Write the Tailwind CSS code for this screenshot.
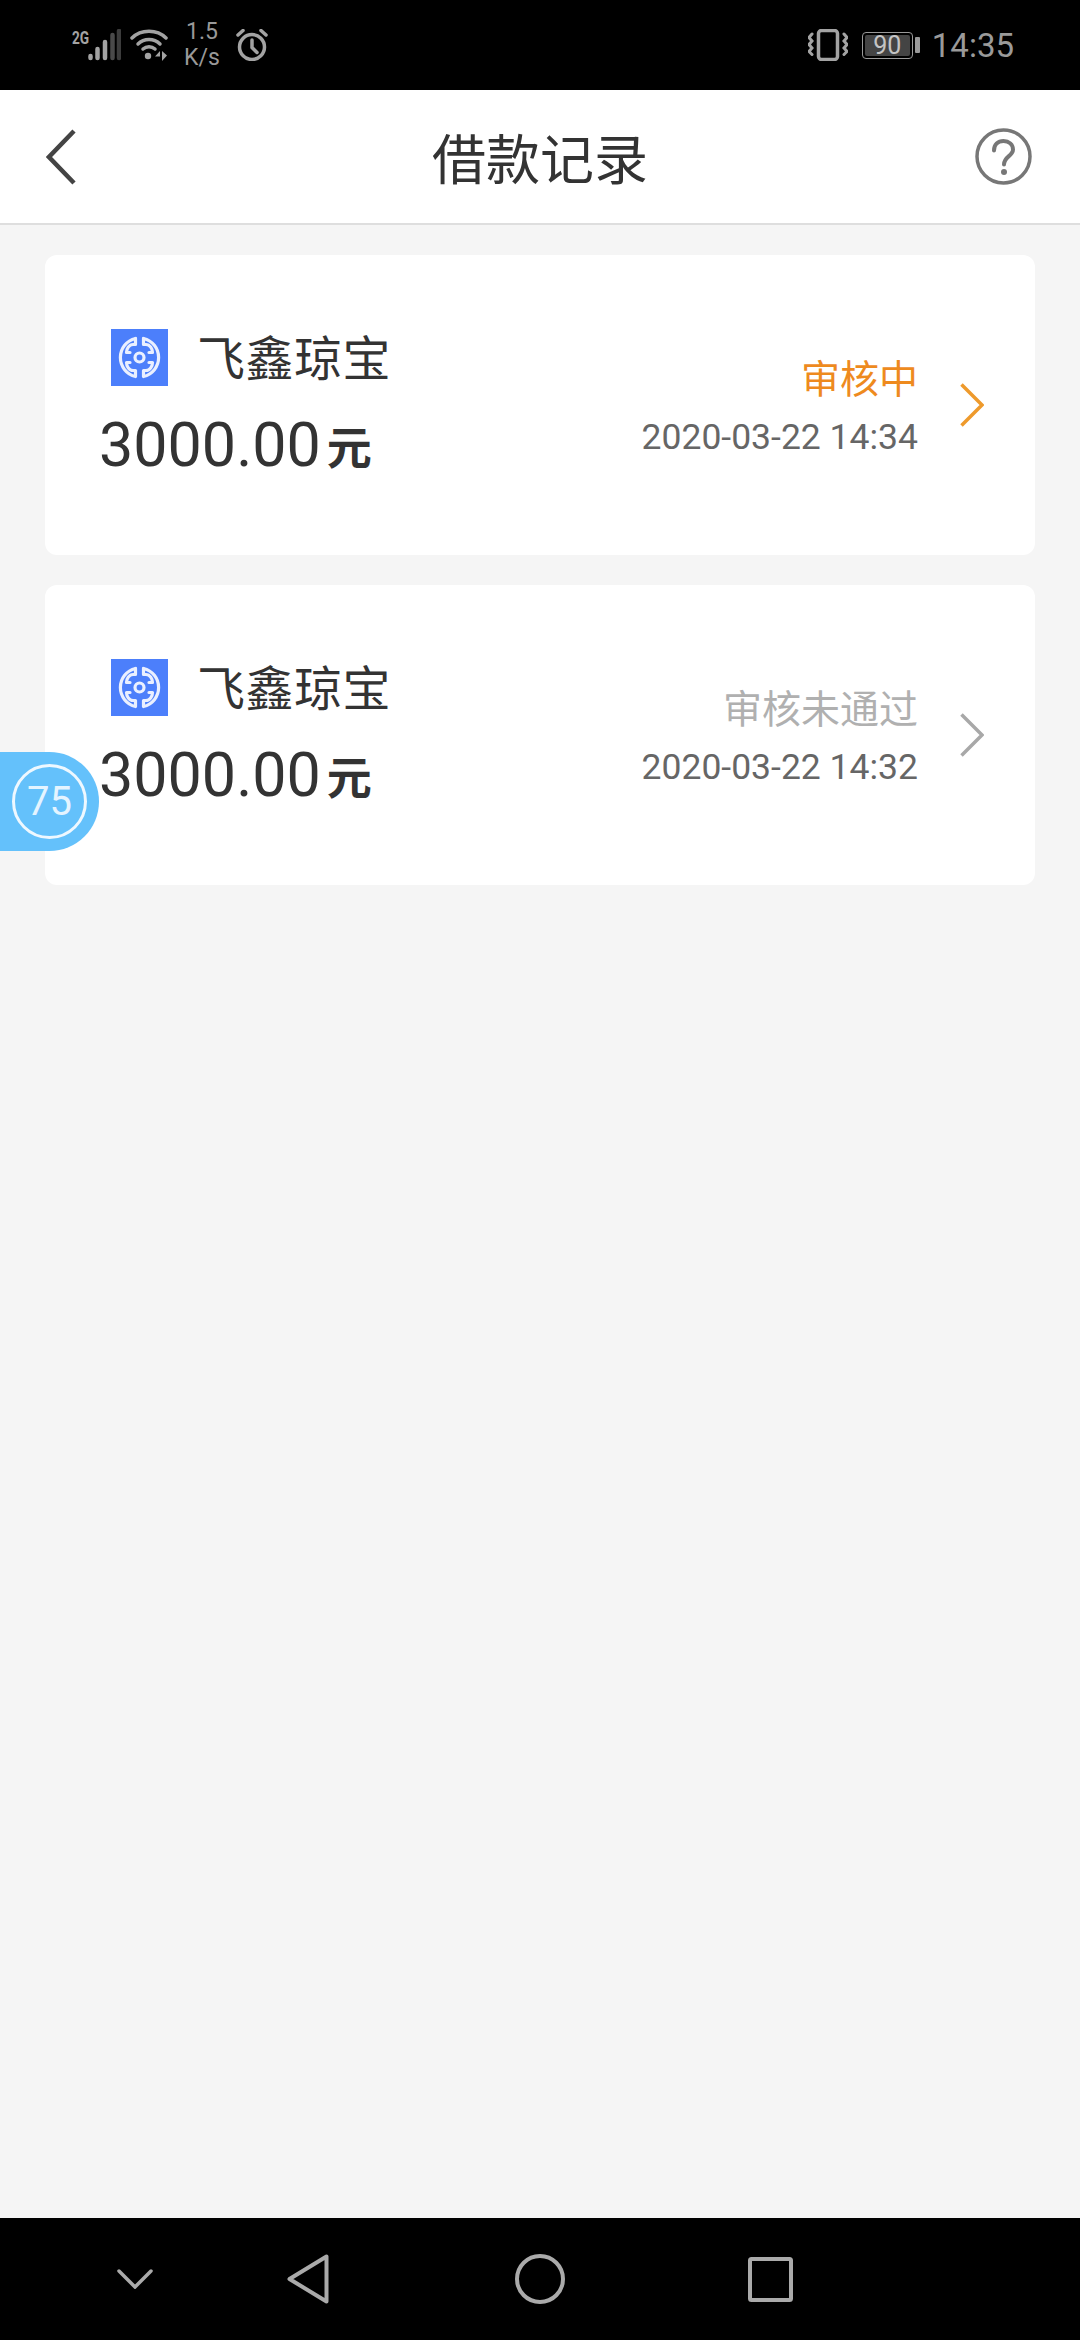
<!DOCTYPE html>
<html lang="zh-CN">
<head>
    <meta charset="UTF-8" />
    <meta name="viewport" content="width=device-width, initial-scale=1.0"/>
    <title>借款记录</title>
    <script src="https://cdn.jsdelivr.net/npm/@tailwindcss/browser@4"></script>
</head>
<body class="bg-[#f5f5f5] font-[Roboto,'Noto_Sans_CJK_SC',sans-serif] text-[#333]">

<div class="relative flex flex-col h-[2340px] w-[1080px] overflow-hidden">

    <!-- status bar -->
    <div class="flex items-center justify-between h-[90px] bg-black text-[#999] pl-[72px] pr-[66px] shrink-0">
        <div class="flex items-center">
            <div class="relative w-[49px] h-[32px]">
                <span class="absolute left-0 top-[-1px] text-[19px] leading-[19px] font-bold scale-x-[0.72] origin-left text-[#a3a3a3]">2G</span>
                <svg class="absolute left-0 top-0" width="49" height="32" viewBox="0 0 49 32">
                    <g stroke-width="4.500" stroke-linecap="round" fill="none">
                        <path d="M18.500 27v2" stroke="#a3a3a3"/>
                        <path d="M25.500 20v9" stroke="#a3a3a3"/>
                        <path d="M33 13v16" stroke="#a3a3a3"/>
                        <path d="M40.500 6v23" stroke="#4a4a4a"/>
                        <path d="M47 2v27" stroke="#3c3c3c"/>
                    </g>
                </svg>
            </div>
            <svg class="ml-[9px]" width="38" height="32" viewBox="0 0 38 32" fill="none" stroke="#a3a3a3" stroke-width="3.500" stroke-linecap="round">
                <path d="M2 9C11 0 27 0 36 9"/>
                <path d="M8 15c6-6 16-6 22 0"/>
                <path d="M13 20c3.500-3 8.500-3 12 0"/>
                <circle cx="18" cy="27" r="3.200" fill="#a3a3a3" stroke="none"/>
                <path d="M30 22l-5 5.500h5z M32 22v10l5-5.500z" fill="#a3a3a3" stroke="none"/>
            </svg>
            <div class="ml-[16px] w-[36px] flex flex-col items-center text-[23px] leading-[26px] text-[#999]">
                <span>1.5</span>
                <span>K/s</span>
            </div>
            <svg class="ml-[16px]" width="32" height="32" viewBox="0 0 32 32" fill="none" stroke="#a3a3a3" stroke-width="3.500" stroke-linecap="round">
                <circle cx="16" cy="18" r="12.500"/>
                <path d="M16 11v7.500l5 5"/>
                <path d="M2 6l5-4.500M30 6l-5-4.500"/>
            </svg>
        </div>
        <div class="flex items-center">
            <svg width="40" height="32" viewBox="0 0 40 32" fill="none" stroke="#a3a3a3" stroke-linecap="round">
                <rect x="10.500" y="1.500" width="19" height="29" rx="3" stroke-width="3.500"/>
                <path d="M4 5l-3 3.500 3 3.500-3 3.500 3 3.500-3 3.500 3 3" stroke-width="3"/>
                <path d="M36 5l3 3.500-3 3.500 3 3.500-3 3.500 3 3.500-3 3" stroke-width="3"/>
            </svg>
            <div class="ml-[14px] flex items-center">
                <div class="flex items-center justify-center w-[51px] h-[27px] border border-[#999] rounded-[4px] p-[2px]">
                    <div class="flex items-center justify-center w-full h-full bg-[#444] rounded-[2px] text-[25px] leading-none text-[#c4c4c4]">90</div>
                </div>
                <div class="ml-[2px] w-[5px] h-[16px] bg-[#999] rounded-[1px]"></div>
            </div>
            <span class="ml-[12px] text-[33px] leading-none text-[#9a9a9a]">14:35</span>
        </div>
    </div>

    <!-- header -->
    <div class="flex items-center justify-between h-[135px] bg-white border-b-2 border-[#dedede] pl-[46px] pr-[48px] shrink-0">
        <div class="w-[59px]">
            <svg width="30" height="56" viewBox="0 0 30 56" fill="none" stroke="#444" stroke-width="4.500">
                <path d="M28 2L3 28l25 26"/>
            </svg>
        </div>
        <h1 class="text-[54px] leading-none font-normal font-['Noto_Sans_CJK_SC',sans-serif]">借款记录</h1>
        <svg width="57" height="57" viewBox="0 0 57 57" fill="none" stroke="#777" stroke-width="3.500">
            <circle cx="28.500" cy="28.500" r="26.500"/>
            <path d="M19 22.500c0-6 4-9.500 9.500-9.500s9.500 3.500 9.500 8.500c0 6.500-9 7-9 15" stroke-width="4" stroke-linecap="round"/>
            <circle cx="29" cy="44" r="3" fill="#777" stroke="none"/>
        </svg>
    </div>

    <!-- records -->
    <div class="flex flex-col gap-[30px] px-[45px] pt-[30px]">

        <div class="flex h-[300px] bg-white rounded-[12px]">
            <div class="pl-[54px] pt-[74px]">
                <div class="flex items-center h-[57px] ml-[12px]">
                    <svg width="57" height="57" viewBox="0 0 57 57" fill="none">
                        <rect width="57" height="57" fill="#4c7ffb"/>
                        <g stroke="#eaf0ff" stroke-width="3.200" stroke-linejoin="round" stroke-linecap="round">
                            <circle cx="28.500" cy="28.500" r="4.500"/>
                            <path d="M24.500 9.500A19.500 19.500 0 0 0 24.500 47.500V41.500H22C18 41.500 15.500 37 15.500 33.500H19"/>
                            <path d="M19 23.500H15.500C15.500 20 18 15.500 22 15.500H24.500V9.500"/>
                            <path d="M32.500 9.500A19.500 19.500 0 0 1 32.500 47.500V41.500H35C39 41.500 41.500 37 41.500 33.500H38"/>
                            <path d="M38 23.500H41.500C41.500 20 39 15.500 35 15.500H32.500V9.500"/>
                        </g>
                    </svg>
                    <span class="ml-[29px] -mt-[5px] text-[48px] leading-none tracking-[0.500px] font-['Noto_Sans_CJK_SC',sans-serif]">飞鑫琼宝</span>
                </div>
                <div class="flex items-center mt-[29px] h-[60px]">
                    <span class="text-[61px] leading-none">3000.00</span>
                    <span class="ml-[6px] text-[45px] leading-none font-bold font-['Noto_Sans_CJK_SC',sans-serif]">元</span>
                </div>
            </div>
            <div class="ml-auto pt-[96px] text-right">
                <p class="text-[39px] leading-[50px] text-[#ee8a1e] font-['Noto_Sans_CJK_SC',sans-serif]">审核中</p>
                <p class="mt-[18px] text-[35.500px] leading-[36px] text-[#666]">2020-03-22 14:34</p>
            </div>
            <svg class="self-center ml-[42px] mr-[51px]" width="24" height="44" viewBox="0 0 24 44" fill="none" stroke="#ee9a2c" stroke-width="3.500">
                <path d="M1.500 1.500L22 22 1.500 42.500"/>
            </svg>
        </div>

        <div class="flex h-[300px] bg-white rounded-[12px]">
            <div class="pl-[54px] pt-[74px]">
                <div class="flex items-center h-[57px] ml-[12px]">
                    <svg width="57" height="57" viewBox="0 0 57 57" fill="none">
                        <rect width="57" height="57" fill="#4c7ffb"/>
                        <g stroke="#eaf0ff" stroke-width="3.200" stroke-linejoin="round" stroke-linecap="round">
                            <circle cx="28.500" cy="28.500" r="4.500"/>
                            <path d="M24.500 9.500A19.500 19.500 0 0 0 24.500 47.500V41.500H22C18 41.500 15.500 37 15.500 33.500H19"/>
                            <path d="M19 23.500H15.500C15.500 20 18 15.500 22 15.500H24.500V9.500"/>
                            <path d="M32.500 9.500A19.500 19.500 0 0 1 32.500 47.500V41.500H35C39 41.500 41.500 37 41.500 33.500H38"/>
                            <path d="M38 23.500H41.500C41.500 20 39 15.500 35 15.500H32.500V9.500"/>
                        </g>
                    </svg>
                    <span class="ml-[29px] -mt-[5px] text-[48px] leading-none tracking-[0.500px] font-['Noto_Sans_CJK_SC',sans-serif]">飞鑫琼宝</span>
                </div>
                <div class="flex items-center mt-[29px] h-[60px]">
                    <span class="text-[61px] leading-none">3000.00</span>
                    <span class="ml-[6px] text-[45px] leading-none font-bold font-['Noto_Sans_CJK_SC',sans-serif]">元</span>
                </div>
            </div>
            <div class="ml-auto pt-[96px] text-right">
                <p class="text-[39px] leading-[50px] text-[#b0b0b0] font-['Noto_Sans_CJK_SC',sans-serif]">审核未通过</p>
                <p class="mt-[18px] text-[35.500px] leading-[36px] text-[#666]">2020-03-22 14:32</p>
            </div>
            <svg class="self-center ml-[42px] mr-[51px]" width="24" height="44" viewBox="0 0 24 44" fill="none" stroke="#a8a8a8" stroke-width="3.500">
                <path d="M1.500 1.500L22 22 1.500 42.500"/>
            </svg>
        </div>
    </div>

    <!-- floating speed badge -->
    <div class="absolute left-0 top-[752px] flex items-center justify-center w-[99px] h-[99px] bg-[#64c1fb] rounded-r-full">
        <div class="flex items-center justify-center w-[75px] h-[75px] border-[3px] border-[#eef8ff] rounded-full text-[40px] leading-none font-normal text-[#e4f4ff]">75</div>
    </div>

    <!-- nav bar -->
    <div class="mt-auto relative flex items-center h-[122px] bg-black shrink-0 pl-[117px]">
        <svg width="36" height="20" viewBox="0 0 36 20" fill="none" stroke="#aaa" stroke-width="3.500" stroke-linecap="round">
            <path d="M2 2l16 16L34 2"/>
        </svg>
        <svg class="ml-[134px]" width="42" height="50" viewBox="0 0 42 50" fill="none" stroke="#aaa" stroke-width="4" stroke-linejoin="round">
            <path d="M39.500 2.500v45L2.500 25z"/>
        </svg>
        <svg class="ml-[186px]" width="50" height="50" viewBox="0 0 50 50" fill="none" stroke="#aaa" stroke-width="4">
            <circle cx="25" cy="25" r="23"/>
        </svg>
        <svg class="ml-[183px]" width="45" height="45" viewBox="0 0 45 45" fill="none" stroke="#aaa" stroke-width="4" stroke-linejoin="round">
            <rect x="2" y="2" width="41" height="41" rx="1.500"/>
        </svg>
    </div>
</div>

</body>
</html>
